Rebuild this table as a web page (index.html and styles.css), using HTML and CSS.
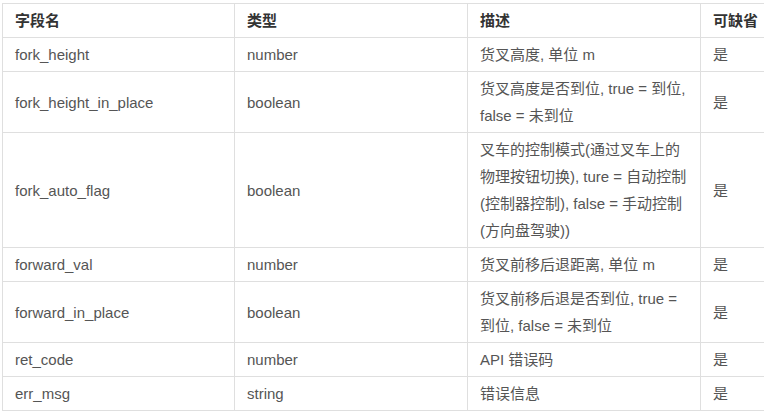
FILE: index.html
```html
<!DOCTYPE html>
<html lang="zh-CN">
<head>
<meta charset="utf-8">
<title>字段说明</title>
<link rel="stylesheet" href="styles.css">
</head>
<body>
<div class="wrap">
<table class="fields">
  <colgroup>
    <col class="c1"><col class="c2"><col class="c3"><col class="c4">
  </colgroup>
  <thead>
    <tr><th>字段名</th><th>类型</th><th>描述</th><th>可缺省</th></tr>
  </thead>
  <tbody>
    <tr><td>fork_height</td><td>number</td><td>货叉高度, 单位 m</td><td>是</td></tr>
    <tr><td>fork_height_in_place</td><td>boolean</td><td>货叉高度是否到位, true = 到位,<br>false = 未到位</td><td>是</td></tr>
    <tr><td>fork_auto_flag</td><td>boolean</td><td>叉车的控制模式(通过叉车上的<br>物理按钮切换), ture = 自动控制<br>(控制器控制), false = 手动控制<br>(方向盘驾驶))</td><td>是</td></tr>
    <tr><td>forward_val</td><td>number</td><td>货叉前移后退距离, 单位 m</td><td>是</td></tr>
    <tr><td>forward_in_place</td><td>boolean</td><td>货叉前移后退是否到位, true =<br>到位, false = 未到位</td><td>是</td></tr>
    <tr><td>ret_code</td><td>number</td><td>API 错误码</td><td>是</td></tr>
    <tr><td>err_msg</td><td>string</td><td>错误信息</td><td>是</td></tr>
  </tbody>
</table>
</div>
</body>
</html>
```
FILE: styles.css
```css
html, body {
  margin: 0;
  padding: 0;
  background: #fff;
  overflow: hidden;
}
.wrap {
  padding: 3px 0 0 2px;
  overflow: hidden;
}
.fields {
  border-collapse: collapse;
  table-layout: fixed;
  width: 932px;
  font-family: "Liberation Sans", "Noto Sans CJK SC", sans-serif;
  font-size: 15px;
  line-height: 27px;
  color: #555;
}
.c1 { width: 232px; }
.c2 { width: 233px; }
.c3 { width: 233px; }
.c4 { width: 234px; }
.fields th,
.fields td {
  border: 1px solid #dfdfdf;
  padding: 3px 12px;
  text-align: left;
  vertical-align: middle;
  white-space: nowrap;
}
.fields th {
  font-weight: bold;
  color: #333;
}
```
